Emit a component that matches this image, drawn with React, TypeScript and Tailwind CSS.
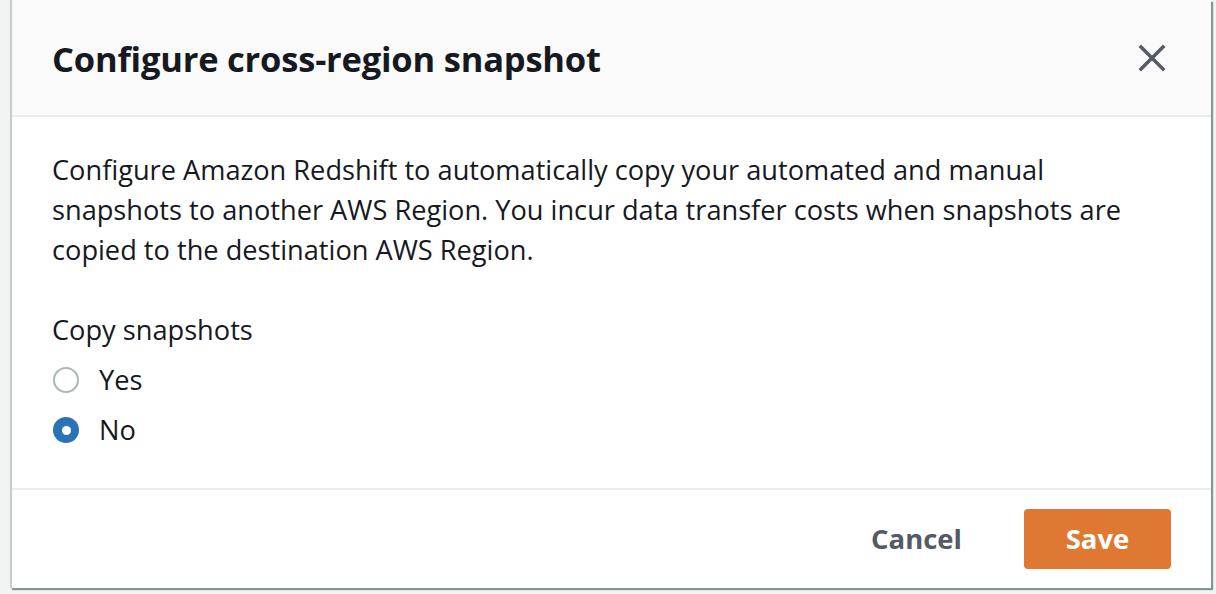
import { X } from 'lucide-react';

export default function App() {
  return (
    <div className="w-[1216px] h-[594px] bg-[#f2f3f3] pl-[10px] pr-[5px] font-['Open_Sans',sans-serif] text-[#16191f] overflow-hidden">
      {/* Modal */}
      <div className="flex h-[588px] w-[1201px] flex-col bg-white border-l-2 border-[#c6cbcc] shadow-[2px_2px_1px_#879596]">
        {/* Header */}
        <div className="flex h-[117px] shrink-0 items-center justify-between border-b-2 border-[#eaeded] bg-[#fafafa] pl-[40px] pr-[37px]">
          <h2 className="mt-[2px] text-[34.5px] font-bold tracking-[-0.2px]">Configure cross-region snapshot</h2>
          <X className="h-[44px] w-[44px] text-[#545b64]" strokeWidth={1.9} strokeLinecap="square" />
        </div>

        {/* Body */}
        <div className="flex flex-1 flex-col border-b-2 border-[#eaeded] px-[40px] pt-[33px]">
          <p className="text-[27.2px] leading-[40px] whitespace-nowrap">
            Configure Amazon Redshift to automatically copy your automated and manual
            <br />
            snapshots to another AWS Region. You incur data transfer costs when snapshots are
            <br />
            copied to the destination AWS Region.
          </p>
          <div className="mt-[40px] text-[27.2px] leading-[40px]">Copy snapshots</div>
          <div className="mt-[10px] flex flex-col gap-[10px]">
            <label className="flex h-[40px] items-center gap-[20px] text-[27.2px]">
              <span className="ml-[1px] h-[26px] w-[26px] rounded-full border-2 border-[#aab7b8] bg-white" />
              Yes
            </label>
            <label className="flex h-[40px] items-center gap-[20px] text-[27.2px]">
              <span className="ml-[1px] flex h-[26px] w-[26px] items-center justify-center rounded-full bg-[#2b73b7]">
                <span className="h-[9px] w-[9px] rounded-full bg-white" />
              </span>
              No
            </label>
          </div>
        </div>

        {/* Footer */}
        <div className="flex h-[98px] shrink-0 items-center justify-end gap-[62px] pr-[40px]">
          <button className="text-[27.5px] font-bold text-[#545b64]">Cancel</button>
          <button className="h-[60px] w-[147px] rounded-[4px] bg-[#df7833] text-[27.5px] font-bold text-white">Save</button>
        </div>
      </div>
    </div>
  );
}
